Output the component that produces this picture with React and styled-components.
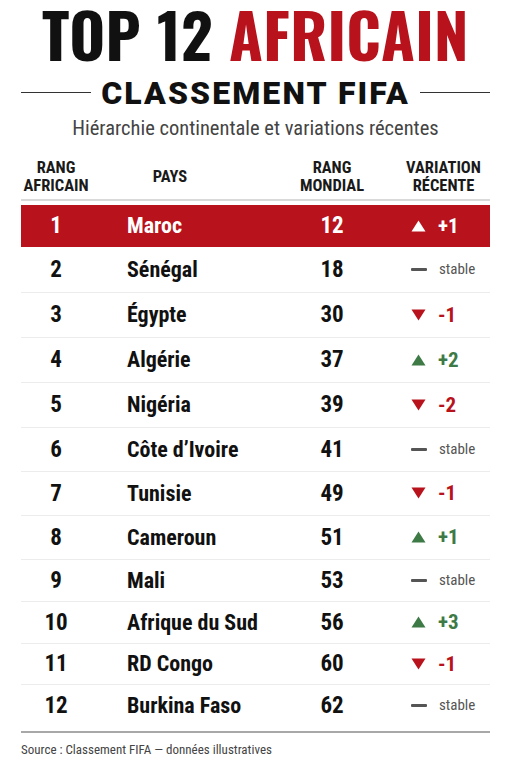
import React from "react";
import styled, { createGlobalStyle } from "styled-components";

const GlobalStyle = createGlobalStyle`
  html, body { margin: 0; padding: 0; background: #fff; }
  body { font-family: "Roboto Condensed", "Liberation Sans", sans-serif; color: #111; }
`;

const RED = "#b8121c";
const GREEN = "#3d7a45";

const Page = styled.div`
  width: 511px;
  box-sizing: border-box;
  padding: 0 21px 0 21px;
`;

const Title = styled.h1`
  margin: 0;
  text-align: center;
  font-family: "Oswald", "Roboto Condensed", sans-serif;
  font-weight: 700;
  font-size: 61.5px;
  line-height: 1.1;
  letter-spacing: 0.3px;
  color: #111;
`;

const Accent = styled.span`
  color: ${RED};
`;

const SubRow = styled.div`
  display: flex;
  align-items: center;
  gap: 10px;
  margin-top: 7px;
`;

const Rule = styled.div`
  flex: 1;
  height: 1.5px;
  background: #333;
`;

const SubTitle = styled.h2`
  margin: 0;
  font-family: "Roboto", "Liberation Sans", sans-serif;
  font-weight: 900;
  font-size: 32px;
  line-height: 36px;
  letter-spacing: 2.1px;
  color: #111;
`;

const Tagline = styled.p`
  margin: 5px 0 0 0;
  text-align: center;
  font-family: "Roboto Condensed", sans-serif;
  font-size: 20.5px;
  line-height: 24px;
  color: #444;
`;

const cols = "70px 190px 102px 1fr";

const HeadRow = styled.div`
  display: grid;
  grid-template-columns: ${cols};
  align-items: center;
  margin-top: 19px;
  padding-bottom: 4px;
  border-bottom: 2px solid #d9d9d9;
`;

const HeadCell = styled.div`
  font-family: "Roboto Condensed", sans-serif;
  font-weight: 700;
  font-size: 16.5px;
  line-height: 18px;
  text-transform: uppercase;
  color: #1a1a1a;
  text-align: center;
  padding-left: ${(p) => p.pl || 0}px;
  padding-right: ${(p) => p.pr || 0}px;
`;

const Body = styled.div`
  margin-top: 4px;
  padding-bottom: 5px;
  border-bottom: 2px solid #a8a8a8;
`;

const Row = styled.div`
  display: grid;
  grid-template-columns: ${cols};
  align-items: center;
  height: ${(p) => p.h}px;
  box-sizing: border-box;
  background: ${(p) => (p.highlight ? RED : "transparent")};
  border-bottom: ${(p) => (p.highlight || p.last ? "none" : "1px solid #ececec")};
  color: ${(p) => (p.highlight ? "#fff" : "#111")};
`;

const Rank = styled.div`
  text-align: center;
  font-family: "Roboto Condensed", sans-serif;
  font-weight: 700;
  font-size: 23px;
`;

const Country = styled.div`
  padding-left: 36px;
  font-family: "Roboto Condensed", sans-serif;
  font-weight: 700;
  font-size: 22px;
  white-space: nowrap;
`;

const World = styled.div`
  text-align: center;
  font-family: "Roboto Condensed", sans-serif;
  font-weight: 700;
  font-size: 23px;
`;

const Variation = styled.div`
  display: flex;
  align-items: center;
  padding-left: 28px;
  gap: 12px;
`;

const VarValue = styled.span`
  font-family: "Roboto Condensed", sans-serif;
  font-weight: 700;
  font-size: 21px;
  color: ${(p) => p.color};
`;

const Stable = styled.span`
  font-family: "Roboto Condensed", sans-serif;
  font-weight: 400;
  font-size: 15px;
  color: #555;
`;

const Dash = styled.span`
  display: inline-block;
  width: 16px;
  height: 3px;
  background: #555;
  border-radius: 1px;
`;

const Source = styled.p`
  margin: 9px 0 0 0;
  font-family: "Roboto Condensed", sans-serif;
  font-size: 13px;
  line-height: 16px;
  color: #444;
`;

function Triangle({ up, color }) {
  return (
    <svg width="15" height="12" viewBox="0 0 15 12" aria-hidden="true">
      {up ? (
        <polygon points="7.5,0.5 14.5,11.5 0.5,11.5" fill={color} />
      ) : (
        <polygon points="0.5,0.5 14.5,0.5 7.5,11.5" fill={color} />
      )}
    </svg>
  );
}

const data = [
  [1, "Maroc", 12, 1],
  [2, "Sénégal", 18, 0],
  [3, "Égypte", 30, -1],
  [4, "Algérie", 37, 2],
  [5, "Nigéria", 39, -2],
  [6, "Côte d’Ivoire", 41, 0],
  [7, "Tunisie", 49, -1],
  [8, "Cameroun", 51, 1],
  [9, "Mali", 53, 0],
  [10, "Afrique du Sud", 56, 3],
  [11, "RD Congo", 60, -1],
  [12, "Burkina Faso", 62, 0],
];

const heights = [42, 46, 45, 45, 45, 44, 44, 44, 42, 42, 41, 41];

function VarCell({ v, highlight }) {
  if (v === 0) {
    return (
      <Variation>
        <Dash />
        <Stable>stable</Stable>
      </Variation>
    );
  }
  const color = highlight ? "#fff" : v > 0 ? GREEN : RED;
  return (
    <Variation>
      <Triangle up={v > 0} color={color} />
      <VarValue color={color}>{v > 0 ? `+${v}` : `-${Math.abs(v)}`}</VarValue>
    </Variation>
  );
}

export default function App() {
  return (
    <Page>
      <GlobalStyle />
      <Title>
        TOP 12 <Accent>AFRICAIN</Accent>
      </Title>
      <SubRow>
        <Rule />
        <SubTitle>CLASSEMENT FIFA</SubTitle>
        <Rule />
      </SubRow>
      <Tagline>Hiérarchie continentale et variations récentes</Tagline>
      <HeadRow>
        <HeadCell>
          Rang
          <br />
          Africain
        </HeadCell>
        <HeadCell pr={32}>Pays</HeadCell>
        <HeadCell>
          Rang
          <br />
          Mondial
        </HeadCell>
        <HeadCell pl={14}>
          Variation
          <br />
          Récente
        </HeadCell>
      </HeadRow>
      <Body>
        {data.map(([r, name, w, v], i) => (
          <Row key={r} h={heights[i]} highlight={i === 0} last={i === data.length - 1}>
            <Rank>{r}</Rank>
            <Country>{name}</Country>
            <World>{w}</World>
            <VarCell v={v} highlight={i === 0} />
          </Row>
        ))}
      </Body>
      <Source>Source : Classement FIFA — données illustratives</Source>
    </Page>
  );
}
